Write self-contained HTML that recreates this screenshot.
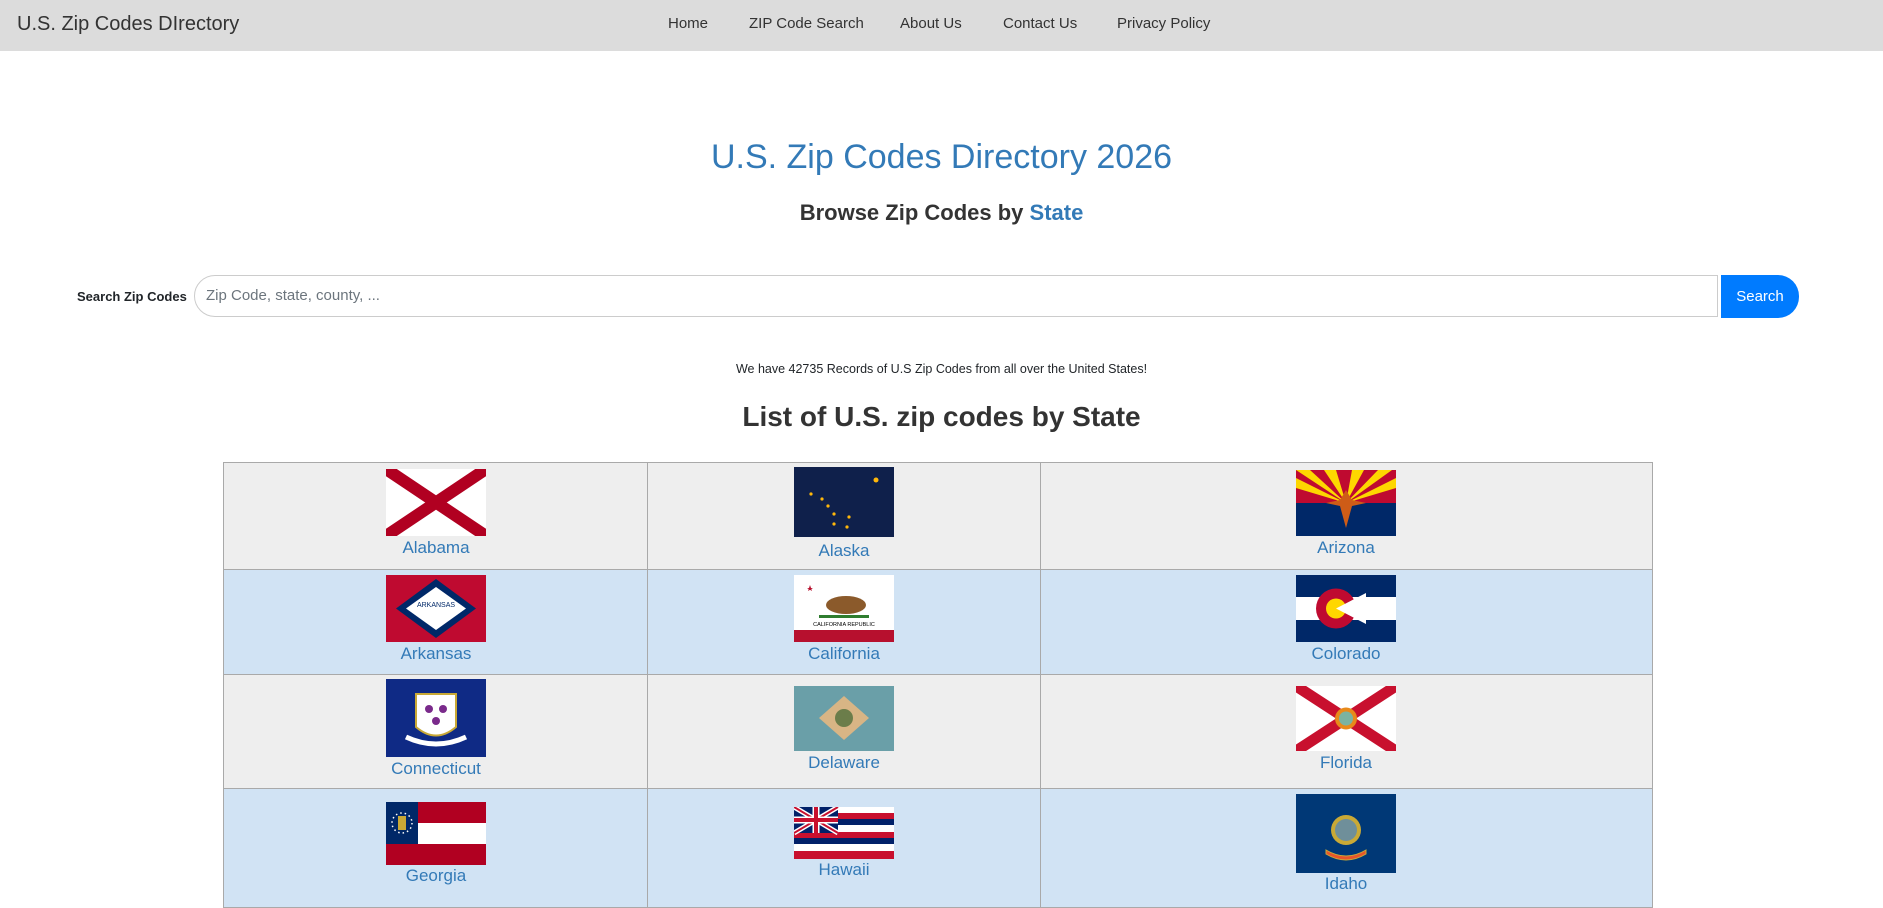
<!DOCTYPE html>
<html><head><meta charset="utf-8"><style>
*{margin:0;padding:0;box-sizing:border-box}
body{width:1883px;height:885px;overflow:hidden;background:#fff;font-family:"Liberation Sans",sans-serif;position:relative;color:#212529}
.nav{position:absolute;left:0;top:0;width:1883px;height:51px;background:#dcdcdc}
.brand{position:absolute;left:17px;top:13px;font-size:20px;color:#333}
.nl{position:absolute;top:15px;font-size:15px;color:#333}
.c{position:absolute;left:0;width:1883px;text-align:center}
.abs{position:absolute}
.cell{position:absolute;border:1px solid #a9a9a9}
.lbl{position:absolute;text-align:center;font-size:17px;color:#337ab7;font-family:"Liberation Sans",Arial,sans-serif}
svg{position:absolute;display:block}
</style></head><body>
<div class="nav">
<div class="brand">U.S. Zip Codes DIrectory</div>
<div class="nl" style="left:668px">Home</div>
<div class="nl" style="left:749px">ZIP Code Search</div>
<div class="nl" style="left:900px">About Us</div>
<div class="nl" style="left:1003px">Contact Us</div>
<div class="nl" style="left:1117px">Privacy Policy</div>
</div>
<div class="c" style="top:138px;font-size:34px;color:#337ab7">U.S. Zip Codes Directory 2026</div>
<div class="c" style="top:200px;font-size:22px;font-weight:bold;color:#333">Browse Zip Codes by <span style="color:#337ab7">State</span></div>
<div class="abs" style="left:77px;top:289px;font-size:13px;font-weight:bold">Search Zip Codes</div>
<div class="abs" style="left:194px;top:275px;width:1524px;height:42px;border:1px solid #ccc;border-radius:21px 0 0 21px;"></div>
<div class="abs" style="left:206px;top:287px;font-size:15px;color:#6c757d">Zip Code, state, county, ...</div>
<div class="abs" style="left:1721px;top:275px;width:78px;height:43px;background:#007bff;border-radius:0 21px 21px 0;color:#fff;font-size:15px;line-height:43px;text-align:center">Search</div>
<div class="c" style="top:362px;font-size:12.5px">We have 42735 Records of U.S Zip Codes from all over the United States!</div>
<div class="c" style="top:401px;font-size:28px;font-weight:bold;color:#333">List of U.S. zip codes by State</div>

<div class="cell" style="left:223px;top:462px;width:425px;height:108px;background:#eee"></div>
<div class="cell" style="left:647px;top:462px;width:394px;height:108px;background:#eee"></div>
<div class="cell" style="left:1040px;top:462px;width:613px;height:108px;background:#eee"></div>
<div class="cell" style="left:223px;top:569px;width:425px;height:106px;background:#d1e3f4"></div>
<div class="cell" style="left:647px;top:569px;width:394px;height:106px;background:#d1e3f4"></div>
<div class="cell" style="left:1040px;top:569px;width:613px;height:106px;background:#d1e3f4"></div>
<div class="cell" style="left:223px;top:674px;width:425px;height:115px;background:#eee"></div>
<div class="cell" style="left:647px;top:674px;width:394px;height:115px;background:#eee"></div>
<div class="cell" style="left:1040px;top:674px;width:613px;height:115px;background:#eee"></div>
<div class="cell" style="left:223px;top:788px;width:425px;height:120px;background:#d1e3f4"></div>
<div class="cell" style="left:647px;top:788px;width:394px;height:120px;background:#d1e3f4"></div>
<div class="cell" style="left:1040px;top:788px;width:613px;height:120px;background:#d1e3f4"></div>

<svg style="left:386px;top:469px" width="100" height="67" viewBox="0 0 100 67"><rect width="100" height="67" fill="#fff"/><path d="M0 0L100 67M100 0L0 67" stroke="#b10021" stroke-width="12"/></svg>
<div class="lbl" style="left:336px;width:200px;top:538px">Alabama</div>
<svg style="left:794px;top:467px" width="100" height="70"><rect width="100" height="70" fill="#0f204b"/><g fill="#ffb70a"><circle cx="82" cy="13" r="2.5"/><circle cx="17" cy="27" r="1.6"/><circle cx="28" cy="32" r="1.6"/><circle cx="34" cy="39" r="1.6"/><circle cx="40" cy="47" r="1.6"/><circle cx="55" cy="50" r="1.6"/><circle cx="40" cy="57" r="1.6"/><circle cx="53" cy="60" r="1.6"/></g></svg>
<div class="lbl" style="left:744px;width:200px;top:541px">Alaska</div>
<svg style="left:1296px;top:470px" width="100" height="66"><rect width="100" height="66" fill="#002868"/><rect width="100" height="33" fill="#bf0a30"/><path d="M50 33L0 0H14ZM50 33L28 0H40ZM50 33L56 0H68ZM50 33L82 0H96ZM50 33L0 18V8ZM50 33L100 8V18Z" fill="#fed700"/><path d="M50 58L44 36L30 33L44 30L50 20L56 30L70 33L56 36Z" fill="#ce5c17"/></svg>
<div class="lbl" style="left:1246px;width:200px;top:538px">Arizona</div>

<svg style="left:386px;top:575px" width="100" height="67"><rect width="100" height="67" fill="#bf0a30"/><path d="M50 4L90 33.5L50 63L10 33.5Z" fill="#002868"/><path d="M50 12L80 33.5L50 55L20 33.5Z" fill="#fff"/><text x="50" y="32" font-size="7" text-anchor="middle" fill="#002868" font-family="Liberation Sans">ARKANSAS</text></svg>
<div class="lbl" style="left:336px;width:200px;top:644px">Arkansas</div>
<svg style="left:794px;top:575px" width="100" height="67"><rect width="100" height="67" fill="#fff"/><rect y="55" width="100" height="12" fill="#b7102e"/><path d="M16 10l2 6-5-3h6l-5 3z" fill="#b7102e"/><ellipse cx="52" cy="30" rx="20" ry="9" fill="#8b5a2b"/><rect x="25" y="40" width="50" height="3" fill="#2f7d2f"/><text x="50" y="51" font-size="5.5" text-anchor="middle" fill="#000" font-family="Liberation Sans">CALIFORNIA  REPUBLIC</text></svg>
<div class="lbl" style="left:744px;width:200px;top:644px">California</div>
<svg style="left:1296px;top:575px" width="100" height="67"><rect width="100" height="67" fill="#002868"/><rect y="22" width="100" height="23" fill="#fff"/><circle cx="40" cy="33.5" r="20" fill="#bf0a30"/><circle cx="40" cy="33.5" r="10" fill="#ffd700"/><path d="M40 33.5L70 18V49Z" fill="#fff"/><path d="M58 22L70 22 70 45 58 45Z" fill="#fff"/></svg>
<div class="lbl" style="left:1246px;width:200px;top:644px">Colorado</div>

<svg style="left:386px;top:679px" width="100" height="78"><rect width="100" height="78" fill="#0f2a85"/><path d="M30 15H70V48Q50 65 30 48Z" fill="#fff" stroke="#c9a936" stroke-width="2"/><circle cx="43" cy="30" r="4" fill="#7a2a8b"/><circle cx="57" cy="30" r="4" fill="#7a2a8b"/><circle cx="50" cy="42" r="4" fill="#7a2a8b"/><path d="M20 58Q50 72 80 58" stroke="#fff" stroke-width="5" fill="none"/></svg>
<div class="lbl" style="left:336px;width:200px;top:759px">Connecticut</div>
<svg style="left:794px;top:686px" width="100" height="65"><rect width="100" height="65" fill="#6a9fa8"/><path d="M50 10L75 32L50 54L25 32Z" fill="#d8b585"/><circle cx="50" cy="32" r="9" fill="#6b7d4a"/></svg>
<div class="lbl" style="left:744px;width:200px;top:753px">Delaware</div>
<svg style="left:1296px;top:686px" width="100" height="65"><rect width="100" height="65" fill="#fff"/><path d="M0 0L100 65M100 0L0 65" stroke="#c8102e" stroke-width="11"/><circle cx="50" cy="32.5" r="11" fill="#e88a1a"/><circle cx="50" cy="32.5" r="7" fill="#7bb3a0"/></svg>
<div class="lbl" style="left:1246px;width:200px;top:753px">Florida</div>

<svg style="left:386px;top:802px" width="100" height="63"><rect width="100" height="63" fill="#b10021"/><rect y="21" width="100" height="21" fill="#fff"/><rect width="32" height="42" fill="#002868"/><circle cx="16" cy="21" r="10" fill="none" stroke="#fff" stroke-width="1.5" stroke-dasharray="1.5 3"/><rect x="12" y="14" width="8" height="14" fill="#c9a936"/></svg>
<div class="lbl" style="left:336px;width:200px;top:866px">Georgia</div>
<svg style="left:794px;top:807px" width="100" height="52"><rect width="100" height="52" fill="#fff"/><rect y="6" width="100" height="6" fill="#c8102e"/><rect y="12" width="100" height="6" fill="#012169"/><rect y="25" width="100" height="6" fill="#c8102e"/><rect y="31" width="100" height="6" fill="#012169"/><rect y="44" width="100" height="8" fill="#c8102e"/><rect width="44" height="26" fill="#012169"/><path d="M0 0L44 26M44 0L0 26" stroke="#fff" stroke-width="5"/><path d="M0 0L44 26M44 0L0 26" stroke="#c8102e" stroke-width="2"/><path d="M22 0V26M0 13H44" stroke="#fff" stroke-width="7"/><path d="M22 0V26M0 13H44" stroke="#c8102e" stroke-width="4"/></svg>
<div class="lbl" style="left:744px;width:200px;top:860px">Hawaii</div>
<svg style="left:1296px;top:794px" width="100" height="79"><rect width="100" height="79" fill="#003876"/><circle cx="50" cy="36" r="15" fill="#c9a936"/><circle cx="50" cy="36" r="11" fill="#6f8f9a"/><path d="M30 56Q50 68 70 56V60Q50 72 30 60Z" fill="#e8552a" stroke="#c9a936"/></svg>
<div class="lbl" style="left:1246px;width:200px;top:874px">Idaho</div>
</body></html>
